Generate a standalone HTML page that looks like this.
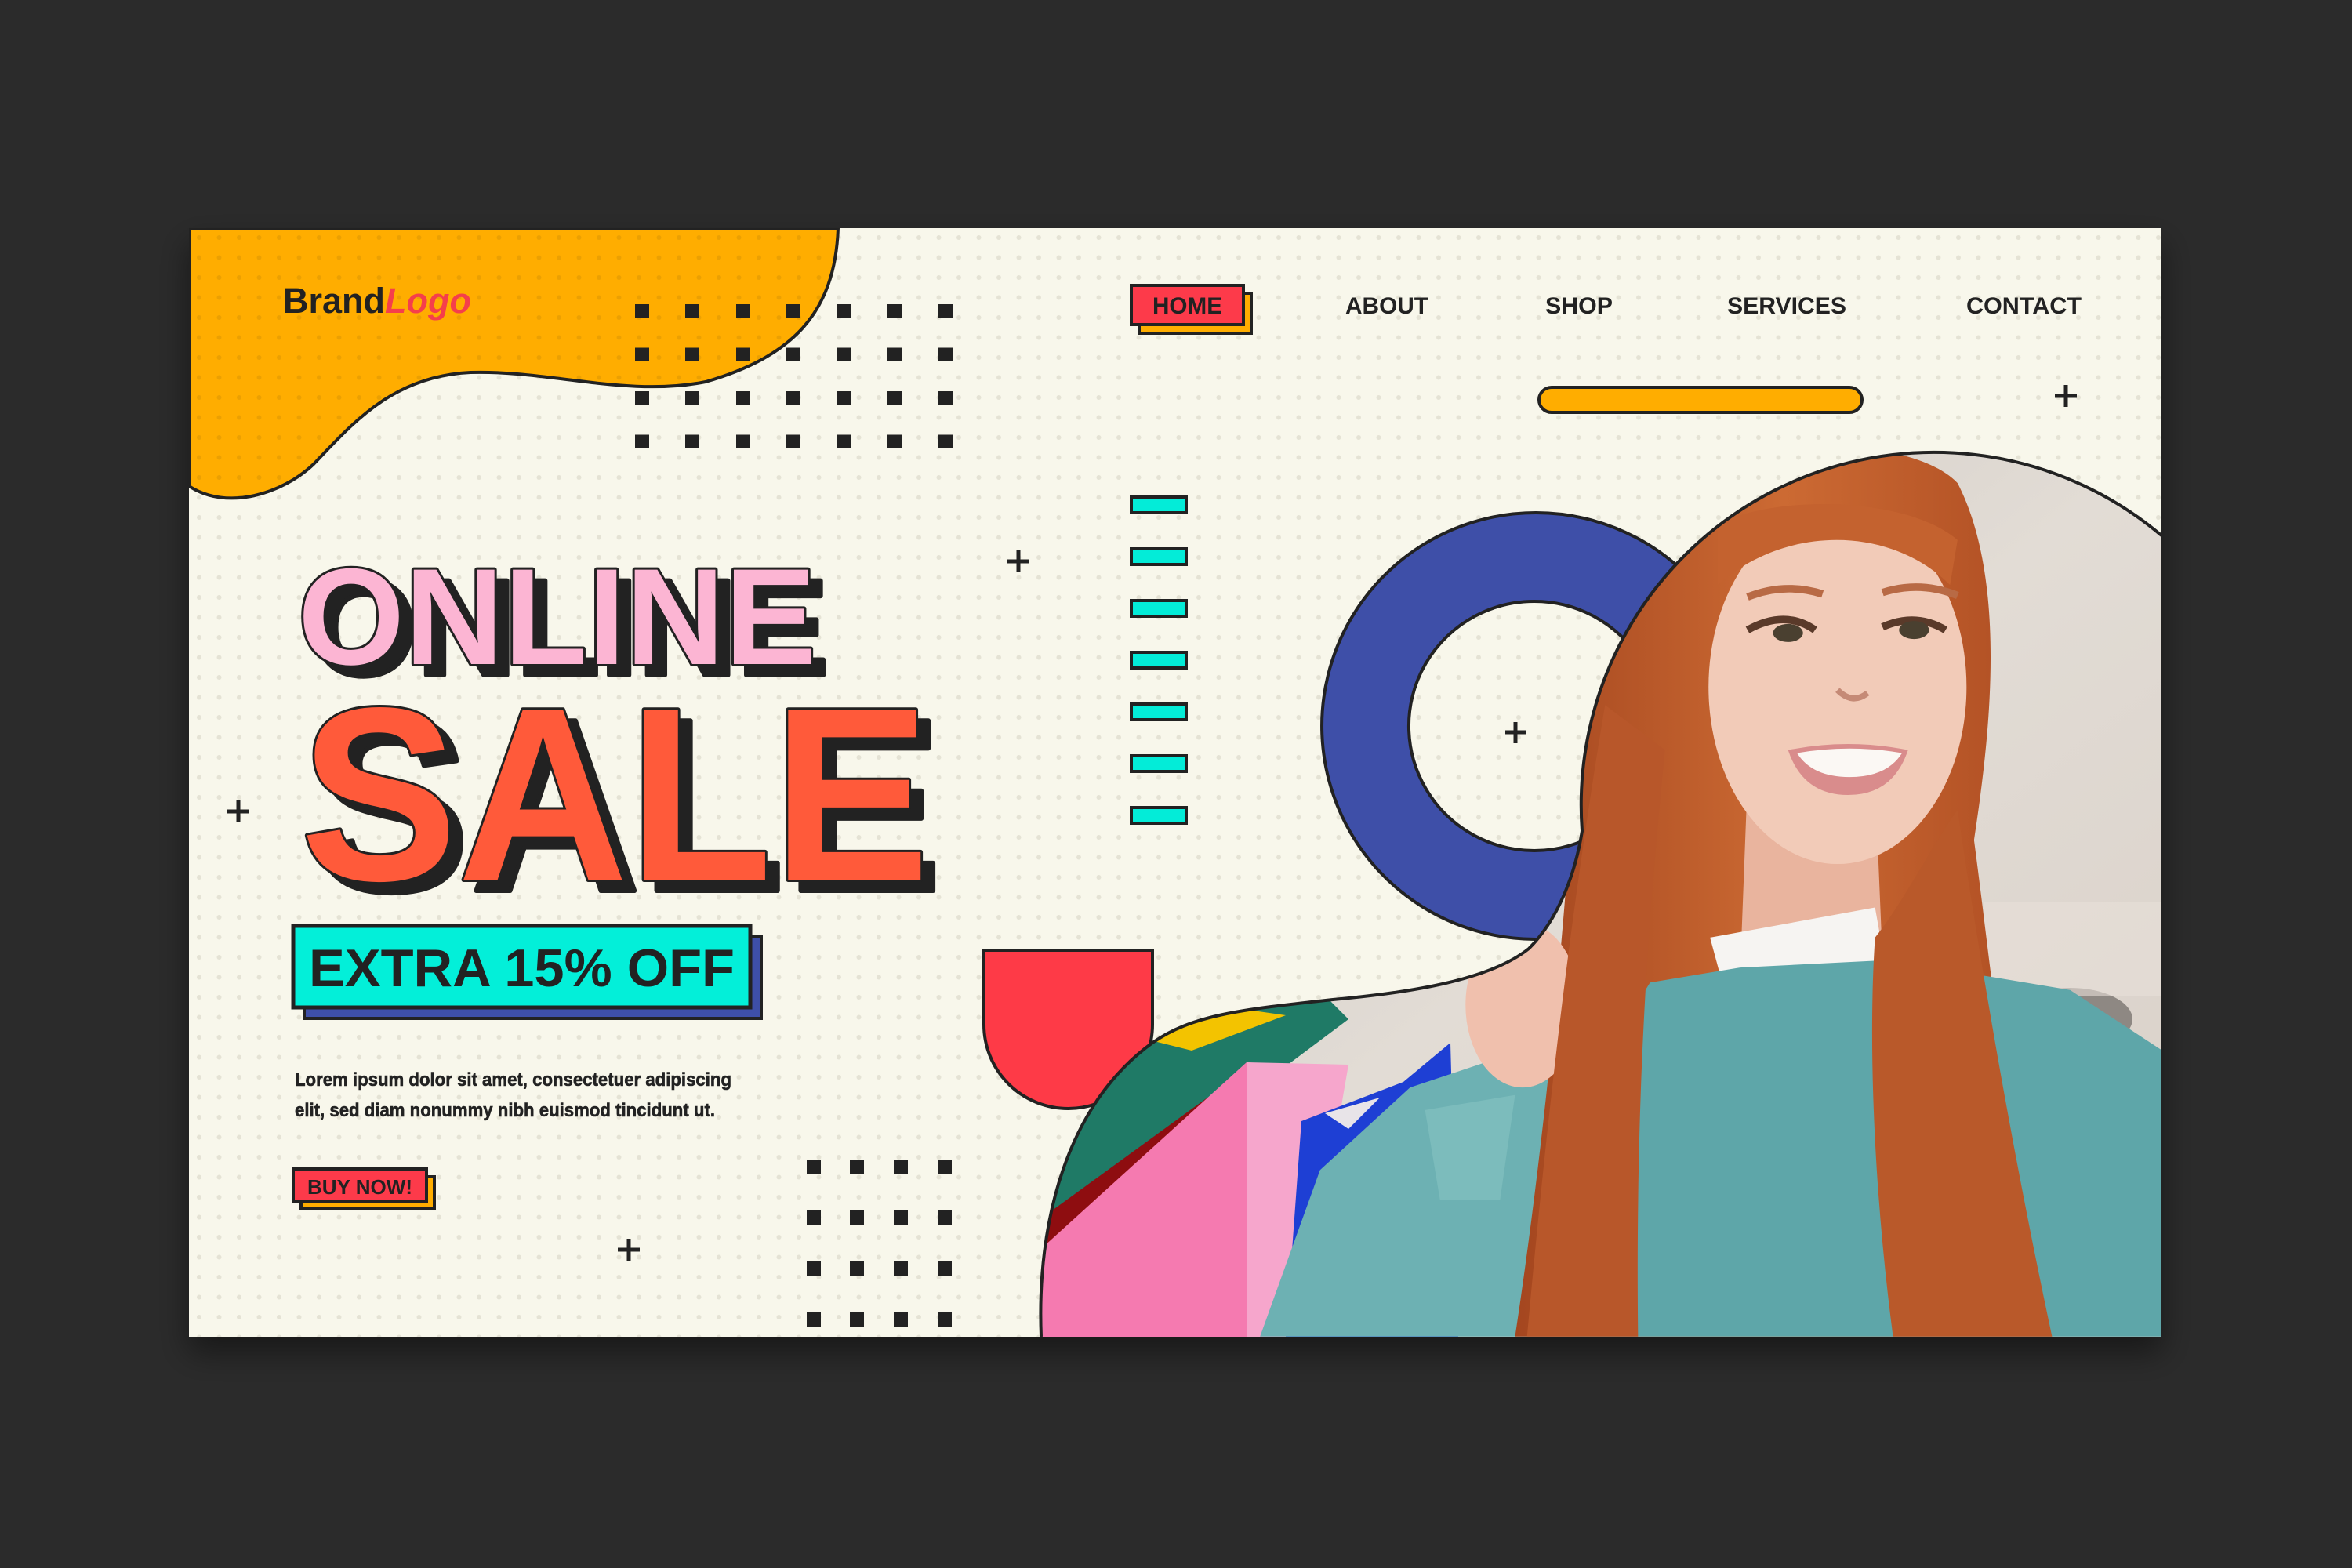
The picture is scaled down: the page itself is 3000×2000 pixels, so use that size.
<!DOCTYPE html>
<html><head><meta charset="utf-8"><style>
html,body{margin:0;padding:0;background:#2b2b2b;width:3000px;height:2000px;overflow:hidden}
svg{display:block}
text{font-family:"Liberation Sans",sans-serif;font-weight:bold}
</style></head><body>
<svg width="3000" height="2000" viewBox="0 0 3000 2000" xmlns="http://www.w3.org/2000/svg">
<defs>
<pattern id="dots" x="249" y="298" width="25.5" height="25.5" patternUnits="userSpaceOnUse">
<circle cx="5" cy="5" r="3" fill="rgba(60,50,20,0.10)"/></pattern>
<clipPath id="card"><rect x="241" y="291" width="2516" height="1414"/></clipPath>
<clipPath id="photo"><path d="M1328,1705 C1322,1560 1360,1410 1470,1330 C1520,1295 1580,1288 1700,1275 C1800,1266 1900,1250 1950,1210 C1990,1170 2010,1110 2018,1060 A450,450 0 0 1 2757,683 L2757,1705 Z"/></clipPath>
<linearGradient id="bg" x1="0" y1="0" x2="1" y2="1"><stop offset="0" stop-color="#c9c3be"/><stop offset="0.5" stop-color="#e2dcd5"/><stop offset="1" stop-color="#d8cfc7"/></linearGradient>
<linearGradient id="hair" x1="0" y1="0" x2="1" y2="0"><stop offset="0" stop-color="#a4461f"/><stop offset="0.5" stop-color="#cc6a33"/><stop offset="1" stop-color="#ad4c22"/></linearGradient>
<filter id="sh" x="-5%" y="-5%" width="110%" height="115%"><feDropShadow dx="0" dy="20" stdDeviation="20" flood-color="#000" flood-opacity="0.45"/></filter>
</defs>
<rect x="241" y="291" width="2516" height="1414" fill="#f8f7eb" filter="url(#sh)"/>
<g clip-path="url(#card)">
<path d="M241,291 L1069,291 C1065,400 1010,455 900,487 C800,507 700,472 600,475 C500,480 450,540 400,592 C360,630 290,652 241,620 Z" fill="#ffad00" stroke="#222" stroke-width="4"/>
<rect x="241" y="291" width="2516" height="1414" fill="url(#dots)"/>
</g>
<g fill="#222">
<g id="row"><rect x="810" y="388" width="18" height="17"/><rect x="874" y="388" width="18" height="17"/><rect x="939" y="388" width="18" height="17"/><rect x="1003" y="388" width="18" height="17"/><rect x="1068" y="388" width="18" height="17"/><rect x="1132" y="388" width="18" height="17"/><rect x="1197" y="388" width="18" height="17"/></g>
<use href="#row" y="55.5"/><use href="#row" y="111"/><use href="#row" y="166.5"/>
<g id="row2"><rect x="1029" y="1479" width="18" height="19"/><rect x="1084" y="1479" width="18" height="19"/><rect x="1140" y="1479" width="18" height="19"/><rect x="1196" y="1479" width="18" height="19"/></g>
<use href="#row2" y="65"/><use href="#row2" y="130"/><use href="#row2" y="195"/>
</g>
<g stroke="#222" stroke-width="5">
<path d="M1285,716h28M1299,702v28"/><path d="M290,1035h28M304,1021v28"/><path d="M788,1594h28M802,1580v28"/><path d="M2621,505h28M2635,491v28"/>
</g>
<g fill="#03ecd8" stroke="#222" stroke-width="4">
<rect x="1443" y="634" width="70" height="20"/><rect x="1443" y="700" width="70" height="20"/><rect x="1443" y="766" width="70" height="20"/><rect x="1443" y="832" width="70" height="20"/><rect x="1443" y="898" width="70" height="20"/><rect x="1443" y="964" width="70" height="20"/><rect x="1443" y="1030" width="70" height="20"/>
</g>
<rect x="1963" y="494" width="412" height="32" rx="16" fill="#ffad00" stroke="#222" stroke-width="4"/>
<path fill-rule="evenodd" d="M1959,654 a273,272 0 1 0 0.1,0 Z M1957,767 a160,159 0 1 1 -0.1,0 Z" fill="#3e4fa8" stroke="#222" stroke-width="4"/>
<path d="M1920,934h27M1933,921v27" stroke="#222" stroke-width="5"/>
<path d="M1255,1212 H1470 V1307 A107.5,107 0 0 1 1255,1307 Z" fill="#fe3a47" stroke="#222" stroke-width="4"/>
<g clip-path="url(#photo)">
<rect x="1300" y="560" width="1470" height="1160" fill="url(#bg)"/>
<ellipse cx="2640" cy="1300" rx="80" ry="40" fill="#5a5552" opacity="0.6"/>
<rect x="2530" y="1150" width="240" height="120" fill="#e8e0d8" opacity="0.6"/>
<path d="M1320,1300 L1680,1260 L1720,1300 L1560,1420 L1320,1560 Z" fill="#1f7a66"/>
<path d="M1440,1320 L1570,1285 L1640,1295 L1520,1340 Z" fill="#f3c300"/>
<path d="M1320,1560 L1540,1400 L1570,1460 L1320,1620 Z" fill="#8e0d10"/>
<path d="M1320,1600 L1590,1355 L1660,1360 L1600,1705 L1320,1705 Z" fill="#f57ab0"/>
<path d="M1590,1355 L1720,1358 L1660,1705 L1590,1705 Z" fill="#f6a6cc"/>
<path d="M1660,1430 L1790,1380 L1850,1330 L1860,1705 L1640,1705 Z" fill="#1e3fd4"/>
<path d="M1690,1420 L1760,1400 L1720,1440 Z" fill="#e8e4e8"/>
<g transform="scale(1.9133)">
<path d="M840,891 L880,780 L940,725 L1000,705 L1050,720 L1080,891 Z" fill="#6db1b3"/>
<path d="M950,740 L1010,730 L1000,800 L960,800 Z" fill="#7cbcbc"/>
<path d="M1070,330 C1130,290 1270,285 1305,322 C1340,390 1325,500 1316,560 C1328,650 1338,760 1368,891 L1010,891 C1030,760 1045,600 1050,500 C1055,420 1050,370 1070,330 Z" fill="url(#hair)"/>
<path d="M1165,520 L1250,520 L1255,640 L1160,650 Z" fill="#e9b49e"/>
<ellipse cx="1225" cy="458" rx="86" ry="118" fill="#f2cbb8"/>
<path d="M1145,350 C1180,330 1270,330 1305,360 L1300,390 C1260,350 1190,350 1145,390 Z" fill="#c4622f"/>
<path d="M1165,420 q25,-14 45,0" stroke="#5a3a2a" stroke-width="5" fill="none"/>
<path d="M1255,418 q22,-10 42,2" stroke="#5a3a2a" stroke-width="5" fill="none"/>
<ellipse cx="1192" cy="422" rx="10" ry="6" fill="#4a4030"/>
<ellipse cx="1276" cy="420" rx="10" ry="6" fill="#4a4030"/>
<path d="M1165,398 q25,-10 50,-2" stroke="#b86a45" stroke-width="5" fill="none"/>
<path d="M1255,395 q25,-8 50,2" stroke="#b86a45" stroke-width="5" fill="none"/>
<path d="M1225,460 q10,10 20,2" stroke="#c58a76" stroke-width="4" fill="none"/>
<path d="M1192,500 q40,-8 80,0 q-10,30 -40,30 q-30,0 -40,-30 Z" fill="#d98c8c"/>
<path d="M1198,502 q35,-6 70,0 q-10,16 -35,16 q-25,0 -35,-16 Z" fill="#fbf8f4"/>
<path d="M1140,625 L1250,605 L1258,650 L1150,662 Z" fill="#f6f4f2"/>
<path d="M1100,655 L1160,645 L1260,640 L1380,660 L1441,700 L1441,891 L1050,891 L1060,720 Z" fill="#5ea6a9"/>
<ellipse cx="1015" cy="670" rx="38" ry="55" fill="#f0c0ad"/>
<path d="M1018,891 C1030,760 1045,620 1070,470 L1110,500 C1100,600 1090,720 1092,891 Z" fill="#b8572a"/>
<path d="M1250,625 C1270,600 1290,560 1305,540 C1320,640 1340,760 1368,891 L1262,891 C1250,800 1245,700 1250,625 Z" fill="#b9592a"/>
</g>
</g>
<path d="M1328,1705 C1322,1560 1360,1410 1470,1330 C1520,1295 1580,1288 1700,1275 C1800,1266 1900,1250 1950,1210 C1990,1170 2010,1110 2018,1060 A450,450 0 0 1 2757,683" fill="none" stroke="#222" stroke-width="4"/>
<text x="361" y="399" font-size="45" fill="#222">Brand<tspan fill="#f53f4b" font-style="italic">Logo</tspan></text>
<rect x="1453" y="374" width="143" height="51" fill="#ffad00" stroke="#222" stroke-width="4"/>
<rect x="1443" y="364" width="143" height="50" fill="#fd3a4a" stroke="#222" stroke-width="4"/>
<g font-size="30" fill="#222">
<text x="1470" y="400" textLength="89" lengthAdjust="spacingAndGlyphs">HOME</text>
<text x="1716" y="400" textLength="106" lengthAdjust="spacingAndGlyphs">ABOUT</text>
<text x="1971" y="400" textLength="86" lengthAdjust="spacingAndGlyphs">SHOP</text>
<text x="2203" y="400" textLength="152" lengthAdjust="spacingAndGlyphs">SERVICES</text>
<text x="2508" y="400" textLength="147" lengthAdjust="spacingAndGlyphs">CONTACT</text>
</g>
<text x="396" y="861" font-size="175" fill="#222" stroke="#222" stroke-width="6" stroke-linejoin="round" textLength="661" lengthAdjust="spacingAndGlyphs">ONLINE</text>
<text x="380" y="847" font-size="175" fill="#fcb5d3" stroke="#222" stroke-width="6" stroke-linejoin="round" paint-order="stroke" textLength="661" lengthAdjust="spacingAndGlyphs">ONLINE</text>
<text x="399" y="1136" font-size="315" fill="#222" stroke="#222" stroke-width="6" stroke-linejoin="round" textLength="803" lengthAdjust="spacingAndGlyphs">SALE</text>
<text x="383" y="1122" font-size="315" fill="#ff5a3a" stroke="#222" stroke-width="6" stroke-linejoin="round" paint-order="stroke" textLength="803" lengthAdjust="spacingAndGlyphs">SALE</text>
<rect x="388" y="1195" width="583" height="104" fill="#3e4fa8" stroke="#222" stroke-width="4"/>
<rect x="374" y="1181" width="583" height="104" fill="#03efd9" stroke="#222" stroke-width="5"/>
<text x="394" y="1258" font-size="68" fill="#222" textLength="543" lengthAdjust="spacingAndGlyphs">EXTRA 15% OFF</text>
<g font-size="24" fill="#222" style="font-weight:normal">
<text x="376" y="1385" textLength="557" lengthAdjust="spacingAndGlyphs" stroke="#222" stroke-width="0.6">Lorem ipsum dolor sit amet, consectetuer adipiscing</text>
<text x="376" y="1424" textLength="536" lengthAdjust="spacingAndGlyphs" stroke="#222" stroke-width="0.6">elit, sed diam nonummy nibh euismod tincidunt ut.</text>
</g>
<rect x="384" y="1501" width="170" height="41" fill="#ffad00" stroke="#222" stroke-width="4"/>
<rect x="374" y="1491" width="170" height="41" fill="#fd3a4a" stroke="#222" stroke-width="4"/>
<text x="392" y="1523" font-size="26" fill="#222" textLength="134" lengthAdjust="spacingAndGlyphs">BUY NOW!</text>
</svg>
</body></html>
